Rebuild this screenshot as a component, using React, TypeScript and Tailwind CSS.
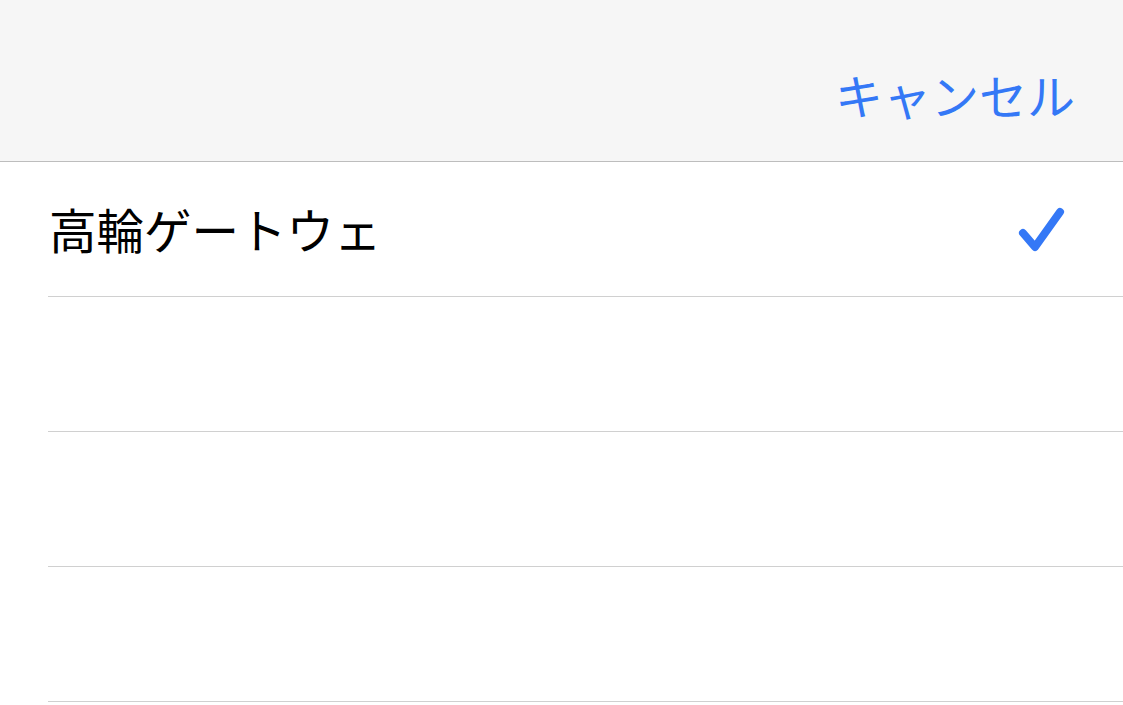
import React from 'react';

const rows = ['高輪ゲートウェ', '', '', ''];

function Check() {
  return (
    <svg width="52" height="50" viewBox="0 0 52 50" fill="none">
      <path
        d="M6 27 L18 41 L43 6"
        stroke="#3478f6"
        strokeWidth="8"
        strokeLinecap="round"
        strokeLinejoin="round"
      />
    </svg>
  );
}

export default function App() {
  return (
    <div
      className="w-[1123px] h-[705px] overflow-hidden bg-white"
      style={{ fontFamily: '"Noto Sans CJK JP", "Noto Sans", sans-serif' }}
    >
      {/* Header */}
      <div className="h-[162px] bg-[#f6f6f6] border-b border-[#bdbdbd] flex items-center justify-end pt-[26px] pr-[48px]">
        <span className="text-[48px] leading-none text-[#3478f6]">キャンセル</span>
      </div>

      {/* List */}
      <div className="flex flex-col">
        {rows.map((label, i) => (
          <div key={i} className="ml-[48px] h-[135px] border-b border-[#d0d0d0] flex items-center justify-between pl-[1px] pr-[54px]">
            <span className="text-[47.5px] leading-none text-black">{label}</span>
            {i === 0 && (
              <div className="pt-[4px]">
                <Check />
              </div>
            )}
          </div>
        ))}
      </div>
    </div>
  );
}
